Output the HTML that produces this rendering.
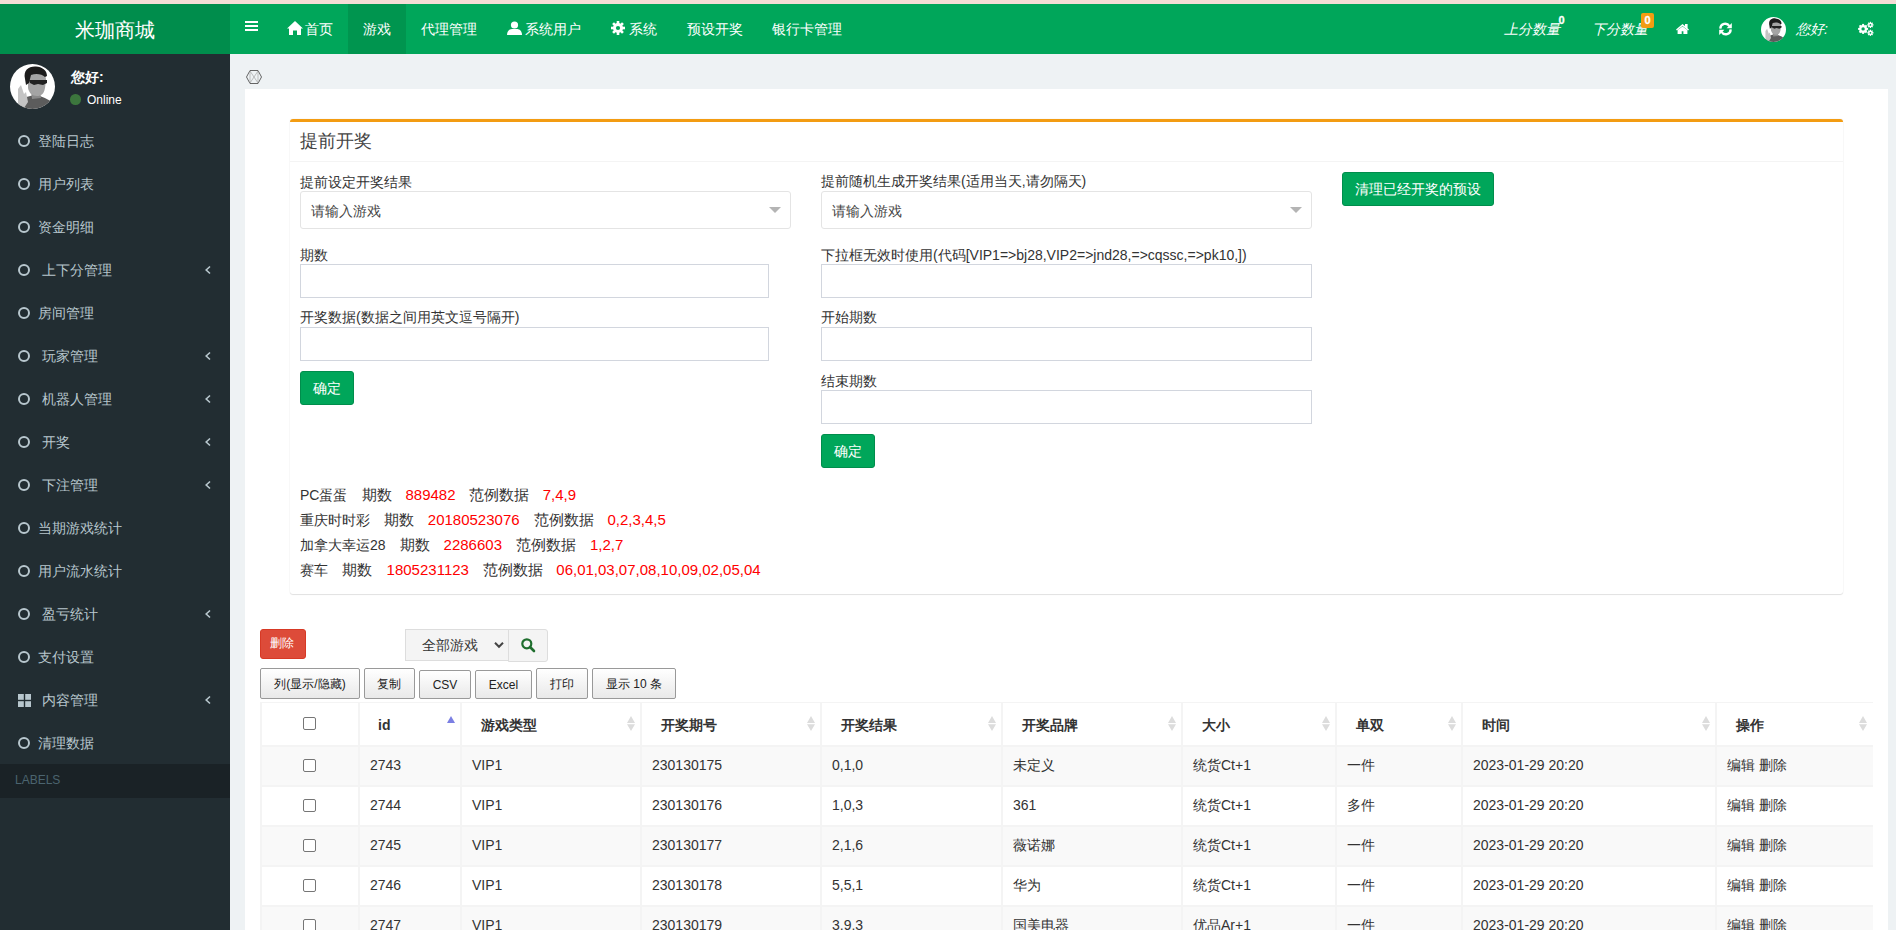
<!DOCTYPE html><html><head><meta charset="utf-8"><style>
*{box-sizing:border-box;margin:0;padding:0}
html,body{width:1896px;height:930px;overflow:hidden;background:#eef2f4;font-family:"Liberation Sans",sans-serif;color:#333;font-size:14px}
.a{position:absolute;white-space:nowrap}
svg{position:absolute;overflow:visible}
</style></head><body>
<div class="a" style="left:0px;top:0px;width:1896px;height:4px;background:#f4ddd6"></div>
<div class="a" style="left:0px;top:4px;width:230px;height:50px;background:#008d4c"></div>
<div class="a" style="left:0;top:20px;width:230px;text-align:center;font-size:20px;line-height:20px;color:#fff">米珈商城</div>
<div class="a" style="left:230px;top:4px;width:1666px;height:50px;background:#00a65a"></div>
<div class="a" style="left:348px;top:4px;width:58px;height:50px;background:#00954f"></div>
<div class="a" style="left:245px;top:21px;width:13px;height:2px;background:#fff"></div>
<div class="a" style="left:245px;top:25px;width:13px;height:2px;background:#fff"></div>
<div class="a" style="left:245px;top:29px;width:13px;height:2px;background:#fff"></div>
<svg style="left:287px;top:21px" width="16" height="14" viewBox="0 0 16 14"><path d="M8 0 L16 7.5 L14 7.5 L14 14 L10 14 L10 9.5 L6 9.5 L6 14 L2 14 L2 7.5 L0 7.5 Z" fill="#fff"/></svg>
<div class="a" style="left:305px;top:19px;font-size:14px;line-height:20px;color:#fff;">首页</div>
<div class="a" style="left:363px;top:19px;font-size:14px;line-height:20px;color:#fff;">游戏</div>
<div class="a" style="left:421px;top:19px;font-size:14px;line-height:20px;color:#fff;">代理管理</div>
<svg style="left:507px;top:21px" width="15" height="14" viewBox="0 0 15 14"><circle cx="7.5" cy="4" r="3.6" fill="#fff"/><path d="M0 14 C0 10 2.5 8 5 8 L10 8 C12.5 8 15 10 15 14 Z" fill="#fff"/></svg>
<div class="a" style="left:525px;top:19px;font-size:14px;line-height:20px;color:#fff;">系统用户</div>
<svg style="left:611px;top:21px" width="14" height="14" viewBox="0 0 14 14"><circle cx="7" cy="7" r="5" fill="#fff"/><rect x="5.7" y="0" width="2.6" height="14" fill="#fff" transform="rotate(0 7 7)"/><rect x="5.7" y="0" width="2.6" height="14" fill="#fff" transform="rotate(45 7 7)"/><rect x="5.7" y="0" width="2.6" height="14" fill="#fff" transform="rotate(90 7 7)"/><rect x="5.7" y="0" width="2.6" height="14" fill="#fff" transform="rotate(135 7 7)"/><circle cx="7" cy="7" r="2.1" fill="#00a65a"/></svg>
<div class="a" style="left:629px;top:19px;font-size:14px;line-height:20px;color:#fff;">系统</div>
<div class="a" style="left:687px;top:19px;font-size:14px;line-height:20px;color:#fff;">预设开奖</div>
<div class="a" style="left:772px;top:19px;font-size:14px;line-height:20px;color:#fff;">银行卡管理</div>
<div class="a" style="left:1504px;top:19px;font-size:14px;line-height:20px;color:#fff;font-style:italic">上分数量</div>
<div class="a" style="left:1558.5px;top:9.5px;font-size:11px;line-height:20px;color:#fff;font-weight:bold;-webkit-text-stroke:0.3px #fff">0</div>
<div class="a" style="left:1592px;top:19px;font-size:14px;line-height:20px;color:#fff;font-style:italic">下分数量</div>
<div class="a" style="left:1641px;top:13px;width:13px;height:15px;background:#f39c12;border-radius:2px"></div>
<div class="a" style="left:1641px;top:14px;width:13px;text-align:center;font-size:11px;line-height:13px;color:#fff;font-weight:bold;-webkit-text-stroke:0.3px #fff">0</div>
<svg style="left:1676px;top:24px" width="13" height="10" viewBox="0 0 13 10"><g fill="#fff"><path d="M6.5 0 L9 2.1 L9 0 L11.6 0 L11.6 4.3 L13 5.5 L12.1 6.5 L6.5 1.9 L0.9 6.5 L0 5.5 Z"/><path d="M1.6 6.1 L6.5 2.4 L11.4 6.1 L11.4 10 L7.4 10 L7.4 7.2 L5.7 7.2 L5.7 10 L1.6 10 Z"/></g></svg>
<svg style="left:1719px;top:23px" width="13" height="12" viewBox="0 0 13 12"><g fill="none" stroke="#fff" stroke-width="2.3"><path d="M1.3 5.6 A4.9 4.9 0 0 1 10.4 3.2"/><path d="M11.7 6.4 A4.9 4.9 0 0 1 2.6 8.8"/></g><g fill="#fff"><path d="M12.8 0 L12.8 5.2 L7.6 5.2 Z"/><path d="M0.2 12 L0.2 6.8 L5.4 6.8 Z"/></g></svg>
<svg style="left:1761px;top:17px" width="25" height="25" viewBox="0 0 45 45"><defs><clipPath id="c1761"><circle cx="22.5" cy="22.5" r="22.5"/></clipPath></defs><g clip-path="url(#c1761)"><rect width="45" height="45" fill="#fff"/><path d="M6 45 L10 38 C14 33 20 31 26 31.5 C32 32 38 35 43 39 L45 45 Z" fill="#5c5c5c"/><path d="M21 27 L30 27 L31 34 L22 35 Z" fill="#8a8a8a"/><path d="M18 12 C18 8 22 6 28 7 C33 8 36 11 36 16 L35 24 C34 30 31 32 27 32 C22 32 19 29 18 24 Z" fill="#a4a4a4"/><path d="M15 15 C13 6 19 2 26 2.5 C32 3 37 6 37 12 L35 13 C32 10 26 9 21 11 L19 19 L16 21 Z" fill="#1c1c1c"/><path d="M19 16 L37 16 L37 19 L33 21 L28 20 L24 21 L20 19 Z" fill="#222"/><path d="M8 25 L11 21 L14 30 L16 28 L18 38 L14 44 L8 41 Z" fill="#c4c4c4"/></g></svg>
<div class="a" style="left:1796px;top:19px;font-size:14px;line-height:20px;color:#fff;font-style:italic">您好:</div>
<svg style="left:1857px;top:22px" width="17" height="14" viewBox="0 0 17 14"><circle cx="6.1" cy="6.9" r="3.9" fill="#fff"/><rect x="5.1" y="1.9000000000000004" width="2.0" height="10.0" fill="#fff" transform="rotate(0.0 6.1 6.9)"/><rect x="5.1" y="1.9000000000000004" width="2.0" height="10.0" fill="#fff" transform="rotate(45.0 6.1 6.9)"/><rect x="5.1" y="1.9000000000000004" width="2.0" height="10.0" fill="#fff" transform="rotate(90.0 6.1 6.9)"/><rect x="5.1" y="1.9000000000000004" width="2.0" height="10.0" fill="#fff" transform="rotate(135.0 6.1 6.9)"/><circle cx="6.1" cy="6.9" r="1.7" fill="#00a65a"/><circle cx="13.4" cy="2.9" r="2.2" fill="#fff"/><rect x="12.75" y="-0.20000000000000018" width="1.3" height="6.2" fill="#fff" transform="rotate(0.0 13.4 2.9)"/><rect x="12.75" y="-0.20000000000000018" width="1.3" height="6.2" fill="#fff" transform="rotate(45.0 13.4 2.9)"/><rect x="12.75" y="-0.20000000000000018" width="1.3" height="6.2" fill="#fff" transform="rotate(90.0 13.4 2.9)"/><rect x="12.75" y="-0.20000000000000018" width="1.3" height="6.2" fill="#fff" transform="rotate(135.0 13.4 2.9)"/><circle cx="13.4" cy="2.9" r="0.9" fill="#00a65a"/><circle cx="13.4" cy="10.8" r="2.2" fill="#fff"/><rect x="12.75" y="7.700000000000001" width="1.3" height="6.2" fill="#fff" transform="rotate(0.0 13.4 10.8)"/><rect x="12.75" y="7.700000000000001" width="1.3" height="6.2" fill="#fff" transform="rotate(45.0 13.4 10.8)"/><rect x="12.75" y="7.700000000000001" width="1.3" height="6.2" fill="#fff" transform="rotate(90.0 13.4 10.8)"/><rect x="12.75" y="7.700000000000001" width="1.3" height="6.2" fill="#fff" transform="rotate(135.0 13.4 10.8)"/><circle cx="13.4" cy="10.8" r="0.9" fill="#00a65a"/></svg>
<div class="a" style="left:0px;top:54px;width:230px;height:876px;background:#222d32"></div>
<svg style="left:10px;top:64px" width="45" height="45" viewBox="0 0 45 45"><defs><clipPath id="c10"><circle cx="22.5" cy="22.5" r="22.5"/></clipPath></defs><g clip-path="url(#c10)"><rect width="45" height="45" fill="#fff"/><path d="M6 45 L10 38 C14 33 20 31 26 31.5 C32 32 38 35 43 39 L45 45 Z" fill="#5c5c5c"/><path d="M21 27 L30 27 L31 34 L22 35 Z" fill="#8a8a8a"/><path d="M18 12 C18 8 22 6 28 7 C33 8 36 11 36 16 L35 24 C34 30 31 32 27 32 C22 32 19 29 18 24 Z" fill="#a4a4a4"/><path d="M15 15 C13 6 19 2 26 2.5 C32 3 37 6 37 12 L35 13 C32 10 26 9 21 11 L19 19 L16 21 Z" fill="#1c1c1c"/><path d="M19 16 L37 16 L37 19 L33 21 L28 20 L24 21 L20 19 Z" fill="#222"/><path d="M8 25 L11 21 L14 30 L16 28 L18 38 L14 44 L8 41 Z" fill="#c4c4c4"/></g></svg>
<div class="a" style="left:71px;top:67px;font-size:14px;line-height:20px;color:#fff;font-weight:bold">您好:</div>
<div class="a" style="left:70px;top:94px;width:10.5px;height:10.5px;border-radius:50%;background:#3c763d"></div>
<div class="a" style="left:87px;top:90px;font-size:12px;line-height:20px;color:#fff;">Online</div>
<div class="a" style="left:18px;top:135px;width:12px;height:12px;border:2.4px solid #b8c7ce;border-radius:50%"></div>
<div class="a" style="left:38px;top:131px;font-size:14px;line-height:20px;color:#b8c7ce;">登陆日志</div>
<div class="a" style="left:18px;top:178px;width:12px;height:12px;border:2.4px solid #b8c7ce;border-radius:50%"></div>
<div class="a" style="left:38px;top:174px;font-size:14px;line-height:20px;color:#b8c7ce;">用户列表</div>
<div class="a" style="left:18px;top:221px;width:12px;height:12px;border:2.4px solid #b8c7ce;border-radius:50%"></div>
<div class="a" style="left:38px;top:217px;font-size:14px;line-height:20px;color:#b8c7ce;">资金明细</div>
<div class="a" style="left:18px;top:264px;width:12px;height:12px;border:2.4px solid #b8c7ce;border-radius:50%"></div>
<div class="a" style="left:42.4px;top:260px;font-size:14px;line-height:20px;color:#b8c7ce;">上下分管理</div>
<svg style="left:205px;top:266px" width="6" height="8" viewBox="0 0 6 8"><path d="M5 0.5 L1.2 4 L5 7.5" fill="none" stroke="#b8c7ce" stroke-width="1.6"/></svg>
<div class="a" style="left:18px;top:307px;width:12px;height:12px;border:2.4px solid #b8c7ce;border-radius:50%"></div>
<div class="a" style="left:38px;top:303px;font-size:14px;line-height:20px;color:#b8c7ce;">房间管理</div>
<div class="a" style="left:18px;top:350px;width:12px;height:12px;border:2.4px solid #b8c7ce;border-radius:50%"></div>
<div class="a" style="left:42.4px;top:346px;font-size:14px;line-height:20px;color:#b8c7ce;">玩家管理</div>
<svg style="left:205px;top:352px" width="6" height="8" viewBox="0 0 6 8"><path d="M5 0.5 L1.2 4 L5 7.5" fill="none" stroke="#b8c7ce" stroke-width="1.6"/></svg>
<div class="a" style="left:18px;top:393px;width:12px;height:12px;border:2.4px solid #b8c7ce;border-radius:50%"></div>
<div class="a" style="left:42.4px;top:389px;font-size:14px;line-height:20px;color:#b8c7ce;">机器人管理</div>
<svg style="left:205px;top:395px" width="6" height="8" viewBox="0 0 6 8"><path d="M5 0.5 L1.2 4 L5 7.5" fill="none" stroke="#b8c7ce" stroke-width="1.6"/></svg>
<div class="a" style="left:18px;top:436px;width:12px;height:12px;border:2.4px solid #b8c7ce;border-radius:50%"></div>
<div class="a" style="left:42.4px;top:432px;font-size:14px;line-height:20px;color:#b8c7ce;">开奖</div>
<svg style="left:205px;top:438px" width="6" height="8" viewBox="0 0 6 8"><path d="M5 0.5 L1.2 4 L5 7.5" fill="none" stroke="#b8c7ce" stroke-width="1.6"/></svg>
<div class="a" style="left:18px;top:479px;width:12px;height:12px;border:2.4px solid #b8c7ce;border-radius:50%"></div>
<div class="a" style="left:42.4px;top:475px;font-size:14px;line-height:20px;color:#b8c7ce;">下注管理</div>
<svg style="left:205px;top:481px" width="6" height="8" viewBox="0 0 6 8"><path d="M5 0.5 L1.2 4 L5 7.5" fill="none" stroke="#b8c7ce" stroke-width="1.6"/></svg>
<div class="a" style="left:18px;top:522px;width:12px;height:12px;border:2.4px solid #b8c7ce;border-radius:50%"></div>
<div class="a" style="left:38px;top:518px;font-size:14px;line-height:20px;color:#b8c7ce;">当期游戏统计</div>
<div class="a" style="left:18px;top:565px;width:12px;height:12px;border:2.4px solid #b8c7ce;border-radius:50%"></div>
<div class="a" style="left:38px;top:561px;font-size:14px;line-height:20px;color:#b8c7ce;">用户流水统计</div>
<div class="a" style="left:18px;top:608px;width:12px;height:12px;border:2.4px solid #b8c7ce;border-radius:50%"></div>
<div class="a" style="left:42.4px;top:604px;font-size:14px;line-height:20px;color:#b8c7ce;">盈亏统计</div>
<svg style="left:205px;top:610px" width="6" height="8" viewBox="0 0 6 8"><path d="M5 0.5 L1.2 4 L5 7.5" fill="none" stroke="#b8c7ce" stroke-width="1.6"/></svg>
<div class="a" style="left:18px;top:651px;width:12px;height:12px;border:2.4px solid #b8c7ce;border-radius:50%"></div>
<div class="a" style="left:38px;top:647px;font-size:14px;line-height:20px;color:#b8c7ce;">支付设置</div>
<svg style="left:18px;top:694px" width="13" height="13" viewBox="0 0 13 13"><g fill="#b8c7ce"><rect x="0" y="0" width="5.8" height="5.8"/><rect x="7.2" y="0" width="5.8" height="5.8"/><rect x="0" y="7.2" width="5.8" height="5.8"/><rect x="7.2" y="7.2" width="5.8" height="5.8"/></g></svg>
<div class="a" style="left:42.4px;top:690px;font-size:14px;line-height:20px;color:#b8c7ce;">内容管理</div>
<svg style="left:205px;top:696px" width="6" height="8" viewBox="0 0 6 8"><path d="M5 0.5 L1.2 4 L5 7.5" fill="none" stroke="#b8c7ce" stroke-width="1.6"/></svg>
<div class="a" style="left:18px;top:737px;width:12px;height:12px;border:2.4px solid #b8c7ce;border-radius:50%"></div>
<div class="a" style="left:38px;top:733px;font-size:14px;line-height:20px;color:#b8c7ce;">清理数据</div>
<div class="a" style="left:0px;top:764px;width:230px;height:34px;background:#1a2226"></div>
<div class="a" style="left:15px;top:770px;font-size:12px;line-height:20px;color:#4b646f;">LABELS</div>
<svg style="left:246px;top:70px" width="16" height="14" viewBox="0 0 16 14"><g fill="none" stroke="#555" stroke-width="0.9"><path d="M4 0.5 L12 0.5 L15.5 7 L12 13.5 L4 13.5 L0.5 7 Z"/></g><g fill="none" stroke="#999" stroke-width="0.6"><path d="M4 1 L12 13 M12 1 L4 13 M4 1 L4 13 M12 1 L12 13"/></g></svg>
<div class="a" style="left:245px;top:89px;width:1643px;height:841px;background:#fff"></div>
<div class="a" style="left:290px;top:119px;width:1553px;height:475px;background:#fff;border-top:3px solid #f39c12;border-radius:3px;box-shadow:0 1px 1px rgba(0,0,0,0.1),0 0 0 1px rgba(0,0,0,0.02)"></div>
<div class="a" style="left:290px;top:161px;width:1553px;height:1px;background:#f4f4f4"></div>
<div class="a" style="left:300px;top:131px;font-size:18px;line-height:20px;color:#444;">提前开奖</div>
<div class="a" style="left:300px;top:172px;font-size:14px;line-height:20px;color:#333;">提前设定开奖结果</div>
<div class="a" style="left:300px;top:191px;width:491px;height:38px;background:#fff;border:1px solid #e4e4e4;border-radius:3px"></div>
<div class="a" style="left:311px;top:201px;font-size:14px;line-height:20px;color:#444;">请输入游戏</div>
<svg style="left:769px;top:207px" width="12" height="6" viewBox="0 0 12 6"><path d="M0 0 L12 0 L6 6 Z" fill="#b4b4b4"/></svg>
<div class="a" style="left:300px;top:245px;font-size:14px;line-height:20px;color:#333;">期数</div>
<div class="a" style="left:300px;top:264px;width:469px;height:34px;background:#fff;border:1px solid #d2d6de"></div>
<div class="a" style="left:300px;top:307px;font-size:14px;line-height:20px;color:#333;">开奖数据(数据之间用英文逗号隔开)</div>
<div class="a" style="left:300px;top:327px;width:469px;height:34px;background:#fff;border:1px solid #d2d6de"></div>
<div class="a" style="left:300px;top:371px;width:54px;height:34px;background:#00a65a;border:1px solid #008d4c;border-radius:3px"></div>
<div class="a" style="left:300px;top:378px;width:54px;text-align:center;font-size:14px;line-height:20px;color:#fff">确定</div>
<div class="a" style="left:821px;top:171px;font-size:14px;line-height:20px;color:#333;">提前随机生成开奖结果(适用当天,请勿隔天)</div>
<div class="a" style="left:821px;top:191px;width:491px;height:38px;background:#fff;border:1px solid #e4e4e4;border-radius:3px"></div>
<div class="a" style="left:832px;top:201px;font-size:14px;line-height:20px;color:#444;">请输入游戏</div>
<svg style="left:1290px;top:207px" width="12" height="6" viewBox="0 0 12 6"><path d="M0 0 L12 0 L6 6 Z" fill="#b4b4b4"/></svg>
<div class="a" style="left:821px;top:245px;font-size:14px;line-height:20px;color:#333;">下拉框无效时使用(代码[VIP1=&gt;bj28,VIP2=&gt;jnd28,=&gt;cqssc,=&gt;pk10,])</div>
<div class="a" style="left:821px;top:264px;width:491px;height:34px;background:#fff;border:1px solid #d2d6de"></div>
<div class="a" style="left:821px;top:307px;font-size:14px;line-height:20px;color:#333;">开始期数</div>
<div class="a" style="left:821px;top:327px;width:491px;height:34px;background:#fff;border:1px solid #d2d6de"></div>
<div class="a" style="left:821px;top:371px;font-size:14px;line-height:20px;color:#333;">结束期数</div>
<div class="a" style="left:821px;top:390px;width:491px;height:34px;background:#fff;border:1px solid #d2d6de"></div>
<div class="a" style="left:821px;top:434px;width:54px;height:34px;background:#00a65a;border:1px solid #008d4c;border-radius:3px"></div>
<div class="a" style="left:821px;top:441px;width:54px;text-align:center;font-size:14px;line-height:20px;color:#fff">确定</div>
<div class="a" style="left:1342px;top:172px;width:152px;height:34px;background:#00a65a;border:1px solid #008d4c;border-radius:3px"></div>
<div class="a" style="left:1342px;top:179px;width:152px;text-align:center;font-size:14px;line-height:20px;color:#fff">清理已经开奖的预设</div>
<div class="a" style="left:300px;top:485px;font-size:14px;line-height:20px;color:#333;">PC蛋蛋</div>
<div class="a" style="left:361.5px;top:485px;font-size:15px;line-height:20px;color:#333;">期数</div>
<div class="a" style="left:405.5px;top:485px;font-size:15px;line-height:20px;color:#f00;">889482</div>
<div class="a" style="left:469px;top:485px;font-size:15px;line-height:20px;color:#333;">范例数据</div>
<div class="a" style="left:542.7px;top:485px;font-size:15px;line-height:20px;color:#f00;">7,4,9</div>
<div class="a" style="left:300px;top:510px;font-size:14px;line-height:20px;color:#333;">重庆时时彩</div>
<div class="a" style="left:384.4px;top:510px;font-size:15px;line-height:20px;color:#333;">期数</div>
<div class="a" style="left:427.8px;top:510px;font-size:15px;line-height:20px;color:#f00;">20180523076</div>
<div class="a" style="left:533.8px;top:510px;font-size:15px;line-height:20px;color:#333;">范例数据</div>
<div class="a" style="left:607.5px;top:510px;font-size:15px;line-height:20px;color:#f00;">0,2,3,4,5</div>
<div class="a" style="left:300px;top:535px;font-size:14px;line-height:20px;color:#333;">加拿大幸运28</div>
<div class="a" style="left:399.6px;top:535px;font-size:15px;line-height:20px;color:#333;">期数</div>
<div class="a" style="left:443.6px;top:535px;font-size:15px;line-height:20px;color:#f00;">2286603</div>
<div class="a" style="left:515.8px;top:535px;font-size:15px;line-height:20px;color:#333;">范例数据</div>
<div class="a" style="left:590px;top:535px;font-size:15px;line-height:20px;color:#f00;">1,2,7</div>
<div class="a" style="left:300px;top:560px;font-size:14px;line-height:20px;color:#333;">赛车</div>
<div class="a" style="left:342.3px;top:560px;font-size:15px;line-height:20px;color:#333;">期数</div>
<div class="a" style="left:386.6px;top:560px;font-size:15px;line-height:20px;color:#f00;">1805231123</div>
<div class="a" style="left:482.5px;top:560px;font-size:15px;line-height:20px;color:#333;">范例数据</div>
<div class="a" style="left:556.3px;top:560px;font-size:15px;line-height:20px;color:#f00;">06,01,03,07,08,10,09,02,05,04</div>
<div class="a" style="left:260px;top:629px;width:46px;height:30px;background:#dd4b39;border:1px solid #d73925;border-radius:3px"></div>
<div class="a" style="left:270px;top:633px;font-size:12px;line-height:20px;color:#fff;">删除</div>
<div class="a" style="left:405px;top:629px;width:104px;height:32px;background:#f4f4f4;border:1px solid #ddd"></div>
<div class="a" style="left:422px;top:635px;font-size:14px;line-height:20px;color:#333;">全部游戏</div>
<svg style="left:494px;top:642px" width="10" height="6" viewBox="0 0 10 6"><path d="M1 0.8 L5 4.8 L9 0.8" fill="none" stroke="#444" stroke-width="2"/></svg>
<div class="a" style="left:508px;top:629px;width:40px;height:33px;background:#f4f4f4;border:1px solid #ddd;border-radius:0 3px 3px 0"></div>
<svg style="left:521px;top:638px" width="14" height="14" viewBox="0 0 14 14"><circle cx="5.8" cy="5.8" r="4.5" fill="none" stroke="#1f6e2e" stroke-width="2.2"/><path d="M9 9 L13 13" stroke="#1f6e2e" stroke-width="2.6" stroke-linecap="round"/></svg>
<div class="a" style="left:260px;top:668px;width:100px;height:31px;background:linear-gradient(#fff,#e9e9e9);border:1px solid #999;border-radius:2px"></div>
<div class="a" style="left:260px;top:674px;width:100px;text-align:center;font-size:12px;line-height:20px;color:#222">列(显示/隐藏)</div>
<div class="a" style="left:364px;top:668px;width:51px;height:31px;background:linear-gradient(#fff,#e9e9e9);border:1px solid #999;border-radius:2px"></div>
<div class="a" style="left:363px;top:674px;width:51px;text-align:center;font-size:12px;line-height:20px;color:#222">复制</div>
<div class="a" style="left:419px;top:670px;width:52px;height:29px;background:linear-gradient(#fff,#e9e9e9);border:1px solid #999;border-radius:2px"></div>
<div class="a" style="left:419px;top:675px;width:52px;text-align:center;font-size:12px;line-height:20px;color:#222">CSV</div>
<div class="a" style="left:475px;top:670px;width:57px;height:29px;background:linear-gradient(#fff,#e9e9e9);border:1px solid #999;border-radius:2px"></div>
<div class="a" style="left:475px;top:675px;width:57px;text-align:center;font-size:12px;line-height:20px;color:#222">Excel</div>
<div class="a" style="left:536px;top:668px;width:52px;height:31px;background:linear-gradient(#fff,#e9e9e9);border:1px solid #999;border-radius:2px"></div>
<div class="a" style="left:536px;top:674px;width:52px;text-align:center;font-size:12px;line-height:20px;color:#222">打印</div>
<div class="a" style="left:592px;top:668px;width:84px;height:31px;background:linear-gradient(#fff,#e9e9e9);border:1px solid #999;border-radius:2px"></div>
<div class="a" style="left:592px;top:674px;width:84px;text-align:center;font-size:12px;line-height:20px;color:#222">显示 10 条</div>
<div class="a" style="left:260px;top:702px;width:1613px;height:228px;border-left:1px solid #f4f4f4;border-top:1px solid #f4f4f4"></div>
<div class="a" style="left:261px;top:703px;width:98px;height:43px;background:#fff;border:1px solid #f4f4f4;border-top:none"></div>
<div class="a" style="left:359px;top:703px;width:102px;height:43px;background:#fff;border:1px solid #f4f4f4;border-top:none"></div>
<div class="a" style="left:378px;top:715px;font-size:14px;line-height:20px;color:#333;font-weight:bold">id</div>
<svg style="left:447px;top:716px" width="8" height="7" viewBox="0 0 8 7"><path d="M4 0 L8 7 L0 7 Z" fill="#7b7fe3"/></svg>
<div class="a" style="left:461px;top:703px;width:180px;height:43px;background:#fff;border:1px solid #f4f4f4;border-top:none"></div>
<div class="a" style="left:481px;top:715px;font-size:14px;line-height:20px;color:#333;font-weight:bold">游戏类型</div>
<svg style="left:627px;top:716px" width="8" height="15" viewBox="0 0 8 15"><path d="M4 0 L8 7 L0 7 Z M0 8.2 L8 8.2 L4 15 Z" fill="#dcdcdc"/></svg>
<div class="a" style="left:641px;top:703px;width:180px;height:43px;background:#fff;border:1px solid #f4f4f4;border-top:none"></div>
<div class="a" style="left:661px;top:715px;font-size:14px;line-height:20px;color:#333;font-weight:bold">开奖期号</div>
<svg style="left:807px;top:716px" width="8" height="15" viewBox="0 0 8 15"><path d="M4 0 L8 7 L0 7 Z M0 8.2 L8 8.2 L4 15 Z" fill="#dcdcdc"/></svg>
<div class="a" style="left:821px;top:703px;width:181px;height:43px;background:#fff;border:1px solid #f4f4f4;border-top:none"></div>
<div class="a" style="left:841px;top:715px;font-size:14px;line-height:20px;color:#333;font-weight:bold">开奖结果</div>
<svg style="left:988px;top:716px" width="8" height="15" viewBox="0 0 8 15"><path d="M4 0 L8 7 L0 7 Z M0 8.2 L8 8.2 L4 15 Z" fill="#dcdcdc"/></svg>
<div class="a" style="left:1002px;top:703px;width:180px;height:43px;background:#fff;border:1px solid #f4f4f4;border-top:none"></div>
<div class="a" style="left:1022px;top:715px;font-size:14px;line-height:20px;color:#333;font-weight:bold">开奖品牌</div>
<svg style="left:1168px;top:716px" width="8" height="15" viewBox="0 0 8 15"><path d="M4 0 L8 7 L0 7 Z M0 8.2 L8 8.2 L4 15 Z" fill="#dcdcdc"/></svg>
<div class="a" style="left:1182px;top:703px;width:154px;height:43px;background:#fff;border:1px solid #f4f4f4;border-top:none"></div>
<div class="a" style="left:1202px;top:715px;font-size:14px;line-height:20px;color:#333;font-weight:bold">大小</div>
<svg style="left:1322px;top:716px" width="8" height="15" viewBox="0 0 8 15"><path d="M4 0 L8 7 L0 7 Z M0 8.2 L8 8.2 L4 15 Z" fill="#dcdcdc"/></svg>
<div class="a" style="left:1336px;top:703px;width:126px;height:43px;background:#fff;border:1px solid #f4f4f4;border-top:none"></div>
<div class="a" style="left:1356px;top:715px;font-size:14px;line-height:20px;color:#333;font-weight:bold">单双</div>
<svg style="left:1448px;top:716px" width="8" height="15" viewBox="0 0 8 15"><path d="M4 0 L8 7 L0 7 Z M0 8.2 L8 8.2 L4 15 Z" fill="#dcdcdc"/></svg>
<div class="a" style="left:1462px;top:703px;width:254px;height:43px;background:#fff;border:1px solid #f4f4f4;border-top:none"></div>
<div class="a" style="left:1482px;top:715px;font-size:14px;line-height:20px;color:#333;font-weight:bold">时间</div>
<svg style="left:1702px;top:716px" width="8" height="15" viewBox="0 0 8 15"><path d="M4 0 L8 7 L0 7 Z M0 8.2 L8 8.2 L4 15 Z" fill="#dcdcdc"/></svg>
<div class="a" style="left:1716px;top:703px;width:157px;height:43px;background:#fff;border:1px solid #f4f4f4;border-top:none;border-right:none"></div>
<div class="a" style="left:1736px;top:715px;font-size:14px;line-height:20px;color:#333;font-weight:bold">操作</div>
<svg style="left:1859px;top:716px" width="8" height="15" viewBox="0 0 8 15"><path d="M4 0 L8 7 L0 7 Z M0 8.2 L8 8.2 L4 15 Z" fill="#dcdcdc"/></svg>
<div class="a" style="left:303px;top:717px;width:13px;height:13px;border:1px solid #767676;border-radius:2px;background:#fff"></div>
<div class="a" style="left:261px;top:746px;width:98px;height:40px;background:#f9f9f9;border:1px solid #f4f4f4"></div>
<div class="a" style="left:359px;top:746px;width:102px;height:40px;background:#f9f9f9;border:1px solid #f4f4f4"></div>
<div class="a" style="left:461px;top:746px;width:180px;height:40px;background:#f9f9f9;border:1px solid #f4f4f4"></div>
<div class="a" style="left:641px;top:746px;width:180px;height:40px;background:#f9f9f9;border:1px solid #f4f4f4"></div>
<div class="a" style="left:821px;top:746px;width:181px;height:40px;background:#f9f9f9;border:1px solid #f4f4f4"></div>
<div class="a" style="left:1002px;top:746px;width:180px;height:40px;background:#f9f9f9;border:1px solid #f4f4f4"></div>
<div class="a" style="left:1182px;top:746px;width:154px;height:40px;background:#f9f9f9;border:1px solid #f4f4f4"></div>
<div class="a" style="left:1336px;top:746px;width:126px;height:40px;background:#f9f9f9;border:1px solid #f4f4f4"></div>
<div class="a" style="left:1462px;top:746px;width:254px;height:40px;background:#f9f9f9;border:1px solid #f4f4f4"></div>
<div class="a" style="left:1716px;top:746px;width:157px;height:40px;background:#f9f9f9;border:1px solid #f4f4f4;border-right:none"></div>
<div class="a" style="left:303px;top:759px;width:13px;height:13px;border:1px solid #767676;border-radius:2px;background:#fff"></div>
<div class="a" style="left:370px;top:755px;font-size:14px;line-height:20px;color:#333;">2743</div>
<div class="a" style="left:472px;top:755px;font-size:14px;line-height:20px;color:#333;">VIP1</div>
<div class="a" style="left:652px;top:755px;font-size:14px;line-height:20px;color:#333;">230130175</div>
<div class="a" style="left:832px;top:755px;font-size:14px;line-height:20px;color:#333;">0,1,0</div>
<div class="a" style="left:1013px;top:755px;font-size:14px;line-height:20px;color:#333;">未定义</div>
<div class="a" style="left:1193px;top:755px;font-size:14px;line-height:20px;color:#333;">统货Ct+1</div>
<div class="a" style="left:1347px;top:755px;font-size:14px;line-height:20px;color:#333;">一件</div>
<div class="a" style="left:1473px;top:755px;font-size:14px;line-height:20px;color:#333;">2023-01-29 20:20</div>
<div class="a" style="left:1727px;top:755px;font-size:14px;line-height:20px;color:#333;">编辑 删除</div>
<div class="a" style="left:261px;top:786px;width:98px;height:40px;background:#fff;border:1px solid #f4f4f4"></div>
<div class="a" style="left:359px;top:786px;width:102px;height:40px;background:#fff;border:1px solid #f4f4f4"></div>
<div class="a" style="left:461px;top:786px;width:180px;height:40px;background:#fff;border:1px solid #f4f4f4"></div>
<div class="a" style="left:641px;top:786px;width:180px;height:40px;background:#fff;border:1px solid #f4f4f4"></div>
<div class="a" style="left:821px;top:786px;width:181px;height:40px;background:#fff;border:1px solid #f4f4f4"></div>
<div class="a" style="left:1002px;top:786px;width:180px;height:40px;background:#fff;border:1px solid #f4f4f4"></div>
<div class="a" style="left:1182px;top:786px;width:154px;height:40px;background:#fff;border:1px solid #f4f4f4"></div>
<div class="a" style="left:1336px;top:786px;width:126px;height:40px;background:#fff;border:1px solid #f4f4f4"></div>
<div class="a" style="left:1462px;top:786px;width:254px;height:40px;background:#fff;border:1px solid #f4f4f4"></div>
<div class="a" style="left:1716px;top:786px;width:157px;height:40px;background:#fff;border:1px solid #f4f4f4;border-right:none"></div>
<div class="a" style="left:303px;top:799px;width:13px;height:13px;border:1px solid #767676;border-radius:2px;background:#fff"></div>
<div class="a" style="left:370px;top:795px;font-size:14px;line-height:20px;color:#333;">2744</div>
<div class="a" style="left:472px;top:795px;font-size:14px;line-height:20px;color:#333;">VIP1</div>
<div class="a" style="left:652px;top:795px;font-size:14px;line-height:20px;color:#333;">230130176</div>
<div class="a" style="left:832px;top:795px;font-size:14px;line-height:20px;color:#333;">1,0,3</div>
<div class="a" style="left:1013px;top:795px;font-size:14px;line-height:20px;color:#333;">361</div>
<div class="a" style="left:1193px;top:795px;font-size:14px;line-height:20px;color:#333;">统货Ct+1</div>
<div class="a" style="left:1347px;top:795px;font-size:14px;line-height:20px;color:#333;">多件</div>
<div class="a" style="left:1473px;top:795px;font-size:14px;line-height:20px;color:#333;">2023-01-29 20:20</div>
<div class="a" style="left:1727px;top:795px;font-size:14px;line-height:20px;color:#333;">编辑 删除</div>
<div class="a" style="left:261px;top:826px;width:98px;height:40px;background:#f9f9f9;border:1px solid #f4f4f4"></div>
<div class="a" style="left:359px;top:826px;width:102px;height:40px;background:#f9f9f9;border:1px solid #f4f4f4"></div>
<div class="a" style="left:461px;top:826px;width:180px;height:40px;background:#f9f9f9;border:1px solid #f4f4f4"></div>
<div class="a" style="left:641px;top:826px;width:180px;height:40px;background:#f9f9f9;border:1px solid #f4f4f4"></div>
<div class="a" style="left:821px;top:826px;width:181px;height:40px;background:#f9f9f9;border:1px solid #f4f4f4"></div>
<div class="a" style="left:1002px;top:826px;width:180px;height:40px;background:#f9f9f9;border:1px solid #f4f4f4"></div>
<div class="a" style="left:1182px;top:826px;width:154px;height:40px;background:#f9f9f9;border:1px solid #f4f4f4"></div>
<div class="a" style="left:1336px;top:826px;width:126px;height:40px;background:#f9f9f9;border:1px solid #f4f4f4"></div>
<div class="a" style="left:1462px;top:826px;width:254px;height:40px;background:#f9f9f9;border:1px solid #f4f4f4"></div>
<div class="a" style="left:1716px;top:826px;width:157px;height:40px;background:#f9f9f9;border:1px solid #f4f4f4;border-right:none"></div>
<div class="a" style="left:303px;top:839px;width:13px;height:13px;border:1px solid #767676;border-radius:2px;background:#fff"></div>
<div class="a" style="left:370px;top:835px;font-size:14px;line-height:20px;color:#333;">2745</div>
<div class="a" style="left:472px;top:835px;font-size:14px;line-height:20px;color:#333;">VIP1</div>
<div class="a" style="left:652px;top:835px;font-size:14px;line-height:20px;color:#333;">230130177</div>
<div class="a" style="left:832px;top:835px;font-size:14px;line-height:20px;color:#333;">2,1,6</div>
<div class="a" style="left:1013px;top:835px;font-size:14px;line-height:20px;color:#333;">薇诺娜</div>
<div class="a" style="left:1193px;top:835px;font-size:14px;line-height:20px;color:#333;">统货Ct+1</div>
<div class="a" style="left:1347px;top:835px;font-size:14px;line-height:20px;color:#333;">一件</div>
<div class="a" style="left:1473px;top:835px;font-size:14px;line-height:20px;color:#333;">2023-01-29 20:20</div>
<div class="a" style="left:1727px;top:835px;font-size:14px;line-height:20px;color:#333;">编辑 删除</div>
<div class="a" style="left:261px;top:866px;width:98px;height:40px;background:#fff;border:1px solid #f4f4f4"></div>
<div class="a" style="left:359px;top:866px;width:102px;height:40px;background:#fff;border:1px solid #f4f4f4"></div>
<div class="a" style="left:461px;top:866px;width:180px;height:40px;background:#fff;border:1px solid #f4f4f4"></div>
<div class="a" style="left:641px;top:866px;width:180px;height:40px;background:#fff;border:1px solid #f4f4f4"></div>
<div class="a" style="left:821px;top:866px;width:181px;height:40px;background:#fff;border:1px solid #f4f4f4"></div>
<div class="a" style="left:1002px;top:866px;width:180px;height:40px;background:#fff;border:1px solid #f4f4f4"></div>
<div class="a" style="left:1182px;top:866px;width:154px;height:40px;background:#fff;border:1px solid #f4f4f4"></div>
<div class="a" style="left:1336px;top:866px;width:126px;height:40px;background:#fff;border:1px solid #f4f4f4"></div>
<div class="a" style="left:1462px;top:866px;width:254px;height:40px;background:#fff;border:1px solid #f4f4f4"></div>
<div class="a" style="left:1716px;top:866px;width:157px;height:40px;background:#fff;border:1px solid #f4f4f4;border-right:none"></div>
<div class="a" style="left:303px;top:879px;width:13px;height:13px;border:1px solid #767676;border-radius:2px;background:#fff"></div>
<div class="a" style="left:370px;top:875px;font-size:14px;line-height:20px;color:#333;">2746</div>
<div class="a" style="left:472px;top:875px;font-size:14px;line-height:20px;color:#333;">VIP1</div>
<div class="a" style="left:652px;top:875px;font-size:14px;line-height:20px;color:#333;">230130178</div>
<div class="a" style="left:832px;top:875px;font-size:14px;line-height:20px;color:#333;">5,5,1</div>
<div class="a" style="left:1013px;top:875px;font-size:14px;line-height:20px;color:#333;">华为</div>
<div class="a" style="left:1193px;top:875px;font-size:14px;line-height:20px;color:#333;">统货Ct+1</div>
<div class="a" style="left:1347px;top:875px;font-size:14px;line-height:20px;color:#333;">一件</div>
<div class="a" style="left:1473px;top:875px;font-size:14px;line-height:20px;color:#333;">2023-01-29 20:20</div>
<div class="a" style="left:1727px;top:875px;font-size:14px;line-height:20px;color:#333;">编辑 删除</div>
<div class="a" style="left:261px;top:906px;width:98px;height:40px;background:#f9f9f9;border:1px solid #f4f4f4"></div>
<div class="a" style="left:359px;top:906px;width:102px;height:40px;background:#f9f9f9;border:1px solid #f4f4f4"></div>
<div class="a" style="left:461px;top:906px;width:180px;height:40px;background:#f9f9f9;border:1px solid #f4f4f4"></div>
<div class="a" style="left:641px;top:906px;width:180px;height:40px;background:#f9f9f9;border:1px solid #f4f4f4"></div>
<div class="a" style="left:821px;top:906px;width:181px;height:40px;background:#f9f9f9;border:1px solid #f4f4f4"></div>
<div class="a" style="left:1002px;top:906px;width:180px;height:40px;background:#f9f9f9;border:1px solid #f4f4f4"></div>
<div class="a" style="left:1182px;top:906px;width:154px;height:40px;background:#f9f9f9;border:1px solid #f4f4f4"></div>
<div class="a" style="left:1336px;top:906px;width:126px;height:40px;background:#f9f9f9;border:1px solid #f4f4f4"></div>
<div class="a" style="left:1462px;top:906px;width:254px;height:40px;background:#f9f9f9;border:1px solid #f4f4f4"></div>
<div class="a" style="left:1716px;top:906px;width:157px;height:40px;background:#f9f9f9;border:1px solid #f4f4f4;border-right:none"></div>
<div class="a" style="left:303px;top:919px;width:13px;height:13px;border:1px solid #767676;border-radius:2px;background:#fff"></div>
<div class="a" style="left:370px;top:915px;font-size:14px;line-height:20px;color:#333;">2747</div>
<div class="a" style="left:472px;top:915px;font-size:14px;line-height:20px;color:#333;">VIP1</div>
<div class="a" style="left:652px;top:915px;font-size:14px;line-height:20px;color:#333;">230130179</div>
<div class="a" style="left:832px;top:915px;font-size:14px;line-height:20px;color:#333;">3,9,3</div>
<div class="a" style="left:1013px;top:915px;font-size:14px;line-height:20px;color:#333;">国美电器</div>
<div class="a" style="left:1193px;top:915px;font-size:14px;line-height:20px;color:#333;">优品Ar+1</div>
<div class="a" style="left:1347px;top:915px;font-size:14px;line-height:20px;color:#333;">一件</div>
<div class="a" style="left:1473px;top:915px;font-size:14px;line-height:20px;color:#333;">2023-01-29 20:20</div>
<div class="a" style="left:1727px;top:915px;font-size:14px;line-height:20px;color:#333;">编辑 删除</div>
</body></html>
